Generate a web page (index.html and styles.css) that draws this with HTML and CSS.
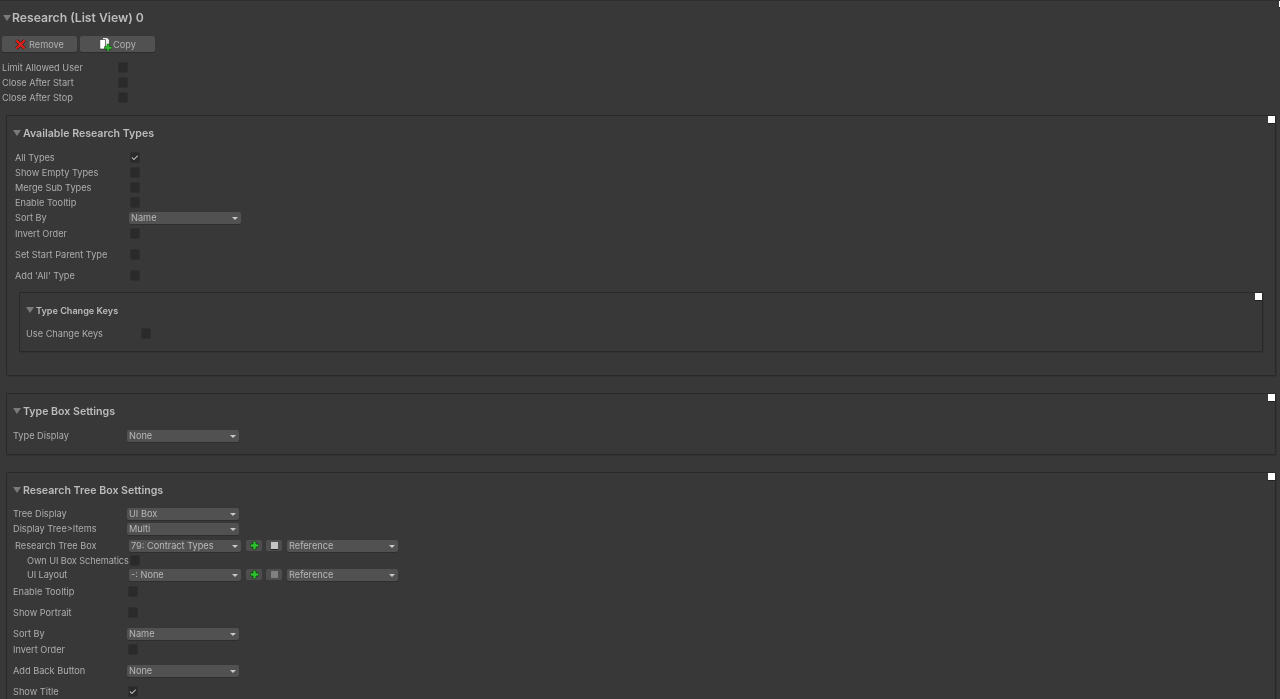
FILE: index.html
```html
<!DOCTYPE html>
<html lang="en">
<head>
<meta charset="utf-8">
<title>Research (List View)</title>
<link rel="stylesheet" href="styles.css">
</head>
<body>
<main class="page">
  <span class="handle handle-page"></span>
  <h1 class="title"><span class="fold fold-title"></span>Research (List View) 0</h1>
  <div class="actions">
    <button class="btn"><svg class="ico-x" viewBox="0 0 12 12"><path d="M1.5 1.5 10.5 10.5M10.5 1.5 1.5 10.5" stroke="#1a1a1a" stroke-width="3.6" fill="none"/><path d="M1.5 1.5 10.5 10.5M10.5 1.5 1.5 10.5" stroke="#e0201c" stroke-width="2.4" fill="none"/></svg>Remove</button>
    <button class="btn"><svg class="ico-copy" viewBox="0 0 13 14"><path d="M3.5 .5h4.5l2.500 2.500v8h-7z" fill="#eee" stroke="#222" stroke-width=".6"/><path d="M.8 2.500h5.700v9.500H.8z" fill="#fff" stroke="#222" stroke-width=".6"/><path d="M8 7h2.500v2.500H13V12h-2.500v2H8v-2H5.500V9.500H8z" fill="#2fb82f" stroke="#0d3d0d" stroke-width=".5"/></svg>Copy</button>
  </div>
  <div class="rows rows-top">
    <div class="row"><label class="lbl lbl-top">Limit Allowed User</label><span class="chk"></span></div>
    <div class="row"><label class="lbl lbl-top">Close After Start</label><span class="chk"></span></div>
    <div class="row"><label class="lbl lbl-top">Close After Stop</label><span class="chk"></span></div>
  </div>

  <section class="box box-types">
    <span class="handle"></span>
    <h2 class="head"><span class="fold"></span>Available Research Types</h2>
    <div class="rows rows-in">
      <div class="row"><label class="lbl lbl-a">All Types</label><span class="chk on">✓</span></div>
      <div class="row"><label class="lbl lbl-a">Show Empty Types</label><span class="chk"></span></div>
      <div class="row"><label class="lbl lbl-a">Merge Sub Types</label><span class="chk"></span></div>
      <div class="row"><label class="lbl lbl-a">Enable Tooltip</label><span class="chk"></span></div>
      <div class="row"><label class="lbl lbl-a">Sort By</label><span class="sel">Name</span></div>
      <div class="row gap1"><label class="lbl lbl-a">Invert Order</label><span class="chk"></span></div>
      <div class="row gap6"><label class="lbl lbl-a">Set Start Parent Type</label><span class="chk"></span></div>
      <div class="row gap6"><label class="lbl lbl-a">Add 'All' Type</label><span class="chk"></span></div>
    </div>
    <section class="box box-inner">
      <span class="handle"></span>
      <h3 class="head head-sm"><span class="fold"></span>Type Change Keys</h3>
      <div class="rows rows-in">
        <div class="row"><label class="lbl lbl-inner">Use Change Keys</label><span class="chk"></span></div>
      </div>
    </section>
  </section>

  <section class="box box-display">
    <span class="handle"></span>
    <h2 class="head"><span class="fold"></span>Type Box Settings</h2>
    <div class="rows rows-in">
      <div class="row"><label class="lbl lbl-b">Type Display</label><span class="sel">None</span></div>
    </div>
  </section>

  <section class="box box-tree">
    <span class="handle"></span>
    <h2 class="head"><span class="fold"></span>Research Tree Box Settings</h2>
    <div class="rows rows-tree">
      <div class="row"><label class="lbl lbl-b">Tree Display</label><span class="sel">UI Box</span></div>
      <div class="row"><label class="lbl lbl-b">Display Tree&gt;Items</label><span class="sel">Multi</span></div>
      <div class="row gap2 shift">
        <label class="lbl lbl-b">Research Tree Box</label><span class="sel">79: Contract Types</span>
        <span class="mini"><svg class="plus" viewBox="0 0 8 8"><path d="M2.700.3h2.600v2.400h2.400v2.600H5.300v2.400H2.700V5.300H.3V2.700h2.400z" fill="#2fc42f" stroke="#0c3a0c" stroke-width=".6"/></svg></span>
        <span class="mini"><i class="sq sq-lit"></i></span>
        <span class="sel sel-ref">Reference</span>
      </div>
      <div class="row row-14 shift"><label class="lbl lbl-b lbl-sub">Own UI Box Schematics</label><span class="chk"></span></div>
      <div class="row shift">
        <label class="lbl lbl-b lbl-sub">UI Layout</label><span class="sel">-: None</span>
        <span class="mini"><svg class="plus" viewBox="0 0 8 8"><path d="M2.700.3h2.600v2.400h2.400v2.600H5.300v2.400H2.700V5.300H.3V2.700h2.400z" fill="#2fc42f" stroke="#0c3a0c" stroke-width=".6"/></svg></span>
        <span class="mini"><i class="sq"></i></span>
        <span class="sel sel-ref">Reference</span>
      </div>
      <div class="row gap2"><label class="lbl lbl-b">Enable Tooltip</label><span class="chk"></span></div>
      <div class="row gap6"><label class="lbl lbl-b">Show Portrait</label><span class="chk"></span></div>
      <div class="row gap6"><label class="lbl lbl-b">Sort By</label><span class="sel">Name</span></div>
      <div class="row gap1"><label class="lbl lbl-b">Invert Order</label><span class="chk"></span></div>
      <div class="row gap6"><label class="lbl lbl-b">Add Back Button</label><span class="sel">None</span></div>
      <div class="row gap6"><label class="lbl lbl-b">Show Title</label><span class="chk on">✓</span></div>
    </div>
  </section>
</main>
</body>
</html>
```
FILE: styles.css
```css
* { box-sizing: border-box; }
html, body { margin: 0; height: 699px; overflow: hidden; background: #383838; }
body { font-family: Inter, "Liberation Sans", sans-serif; color: #adadad; font-size: 9.2px; }
.page { position: relative; height: 699px; overflow: hidden; padding-top: 7px; border-top: 1px solid #2f2f2f; filter: blur(.35px); }

.title { display: flex; align-items: center; height: 19px; margin: 0; font-size: 12.2px; font-weight: 600; color: #bcbcbc; padding-left: 3px; }
.head { display: flex; align-items: center; height: 18px; margin: 0; padding-left: 6px; font-size: 10.6px; font-weight: 600; color: #bcbcbc; }
.head-sm { height: 16px; font-size: 9.1px; padding-left: 6px; }
.fold { width: 0; height: 0; border-left: 4px solid transparent; border-right: 4px solid transparent; border-top: 6px solid #7a7a7a; }
.head .fold { margin-right: 2px; }
.fold-title { margin-right: 1px; }

.actions { display: flex; gap: 3px; margin-top: 9px; padding-left: 2px; }
.btn { display: flex; align-items: center; justify-content: center; width: 75px; height: 16px; padding: 0; border: 0; border-radius: 2px; background: #515151; box-shadow: 0 1px 0 #2c2c2c; color: #b0b0b0; font: inherit; }
.ico-x { width: 11px; height: 11px; margin-right: 3px; margin-top: 1px; }
.ico-copy { width: 13px; height: 14px; margin-right: 1px; margin-top: -1px; }

.rows-top { margin-top: 8px; padding-left: 2px; }
.rows-in { margin-top: 8px; }
.rows-tree { margin-top: 7px; }
.row { display: flex; align-items: center; height: 15px; }
.row-14 { height: 14px; }
.gap1 { margin-top: 1px; }
.gap2 { margin-top: 2px; }
.gap6 { margin-top: 6px; }

.lbl { display: block; flex: none; white-space: nowrap; }
.lbl-top { width: 115px; }
.lbl-a { width: 114px; margin-left: 8px; }
.lbl-inner { width: 114px; margin-left: 6px; }
.lbl-b { width: 114px; margin-left: 6px; }
.lbl-sub { padding-left: 12px; letter-spacing: -.1px; }
.shift .lbl-b { margin-left: 8px; }

.chk { display: flex; align-items: center; justify-content: center; flex: none; width: 10.5px; height: 11px; margin-left: .5px; border-radius: 2px; background: #2a2a2a; border: 1px solid #2f2f2f; color: #e6e6e6; font-size: 9px; line-height: 1; }

.sel { position: relative; display: flex; align-items: center; flex: none; width: 112px; height: 12px; padding-left: 2px; border-radius: 2px; background: #515151; box-shadow: 0 1px 0 #2e2e2e; color: #b8b8b8; }
.sel::after { content: ""; position: absolute; right: 3px; top: 5px; border-left: 3px solid transparent; border-right: 3px solid transparent; border-top: 3px solid #c8c8c8; }
.sel-ref { width: 111px; margin-left: 5px; }

.mini { display: flex; align-items: center; justify-content: center; flex: none; width: 16px; height: 11px; margin-left: 5px; border-radius: 2px; background: #4e4e4e; }
.mini + .mini { margin-left: 4px; }
.plus { width: 9px; height: 9px; }
.sq { display: block; width: 7px; height: 7px; background: #808080; }
.sq-lit { background: #c4c4c4; box-shadow: 0 1px 0 #222; }

.box { position: relative; border: 1px solid #292929; border-radius: 1px; box-shadow: 1px 1px 0 rgba(0, 0, 0, .1); }
.box-types { margin: 10px 4px 0 6px; padding: 8px 0 23px; }
.box-inner { margin: 9px 12px 0 12px; padding: 9px 0 10px; }
.box-display { margin: 17px 4px 0 6px; padding: 8px 0 11px; }
.box-tree { margin: 17px 4px 0 6px; padding: 8px 0 40px; }

.handle { position: absolute; top: 0; right: 0; width: 7px; height: 7px; background: #fff; box-shadow: 0 1px 0 #222; }
.handle-page { top: -1px; right: -6px; }
```
